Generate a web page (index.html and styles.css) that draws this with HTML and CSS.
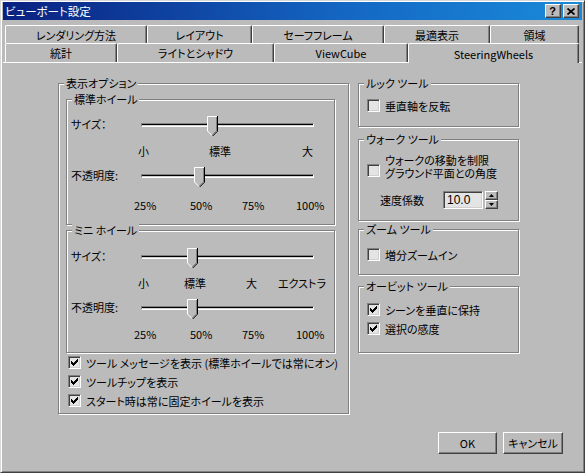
FILE: index.html
```html
<!DOCTYPE html>
<html lang="ja">
<head>
<meta charset="utf-8">
<title>ビューポート設定</title>
<link rel="stylesheet" href="styles.css">
</head>
<body>
<div class="window">
  <div class="titlebar">
    <span class="title">ビューポート設定</span>
    <div class="title-btns">
      <span class="tbtn help">?</span>
      <span class="tbtn close"><svg width="8" height="7" viewBox="0 0 8 7"><path d="M0.5 0.5L7.5 6.5M7.5 0.5L0.5 6.5" stroke="#000" stroke-width="1.7"/></svg></span>
    </div>
  </div>

  <div class="tabs">
    <div class="tabrow back">
      <div class="tab w-render">レンダリング方法</div>
      <div class="tab w-layout">レイアウト</div>
      <div class="tab w-safe">セーフフレーム</div>
      <div class="tab w-adapt">最適表示</div>
      <div class="tab w-region">領域</div>
    </div>
    <div class="tabrow front">
      <div class="tab w-stats">統計</div>
      <div class="tab w-light">ライトとシャドウ</div>
      <div class="tab w-cube">ViewCube</div>
      <div class="tab w-wheels selected">SteeringWheels</div>
    </div>
  </div>

  <div class="panel">
    <div class="columns">
      <div class="col-left">
        <div class="group outer">
          <span class="gtitle">表示オプション</span>

          <div class="group wheel std">
            <span class="gtitle">標準ホイール</span>
            <div class="srow">
              <span class="slabel">サイズ：</span>
              <div class="track"><span class="thumb" style="left:65px"><svg width="11" height="20" viewBox="0 0 11 20"><path d="M0 0H11V15L5.5 20.5L0 15Z" fill="#bbb"/><path d="M0.5 15V0.5H10" stroke="#fff" fill="none"/><path d="M0.5 15L5 19.5" stroke="#fff" fill="none"/><path d="M9.5 1V14.8L5.2 19" stroke="#808080" fill="none"/><path d="M10.5 0V15.2L5.5 20.2" stroke="#000" fill="none"/></svg></span></div>
            </div>
            <div class="ticks">
              <span class="t-s1">小</span><span class="t-s2">標準</span><span>大</span>
            </div>
            <div class="srow">
              <span class="slabel">不透明度:</span>
              <div class="track"><span class="thumb" style="left:52px"><svg width="11" height="20" viewBox="0 0 11 20"><path d="M0 0H11V15L5.5 20.5L0 15Z" fill="#bbb"/><path d="M0.5 15V0.5H10" stroke="#fff" fill="none"/><path d="M0.5 15L5 19.5" stroke="#fff" fill="none"/><path d="M9.5 1V14.8L5.2 19" stroke="#808080" fill="none"/><path d="M10.5 0V15.2L5.5 20.2" stroke="#000" fill="none"/></svg></span></div>
            </div>
            <div class="pcts">
              <span class="p1">25%</span><span class="p2">50%</span><span class="p3">75%</span><span>100%</span>
            </div>
          </div>

          <div class="group wheel mini">
            <span class="gtitle">ミニ ホイール</span>
            <div class="srow">
              <span class="slabel">サイズ：</span>
              <div class="track"><span class="thumb" style="left:45px"><svg width="11" height="20" viewBox="0 0 11 20"><path d="M0 0H11V15L5.5 20.5L0 15Z" fill="#bbb"/><path d="M0.5 15V0.5H10" stroke="#fff" fill="none"/><path d="M0.5 15L5 19.5" stroke="#fff" fill="none"/><path d="M9.5 1V14.8L5.2 19" stroke="#808080" fill="none"/><path d="M10.5 0V15.2L5.5 20.2" stroke="#000" fill="none"/></svg></span></div>
            </div>
            <div class="ticks">
              <span class="t-m1">小</span><span class="t-m2">標準</span><span class="t-m3">大</span><span>エクストラ</span>
            </div>
            <div class="srow">
              <span class="slabel">不透明度:</span>
              <div class="track"><span class="thumb" style="left:45px"><svg width="11" height="20" viewBox="0 0 11 20"><path d="M0 0H11V15L5.5 20.5L0 15Z" fill="#bbb"/><path d="M0.5 15V0.5H10" stroke="#fff" fill="none"/><path d="M0.5 15L5 19.5" stroke="#fff" fill="none"/><path d="M9.5 1V14.8L5.2 19" stroke="#808080" fill="none"/><path d="M10.5 0V15.2L5.5 20.2" stroke="#000" fill="none"/></svg></span></div>
            </div>
            <div class="pcts">
              <span class="p1">25%</span><span class="p2">50%</span><span class="p3">75%</span><span>100%</span>
            </div>
          </div>

          <div class="check indent">
            <span class="cb"><svg width="11" height="11" viewBox="1 1 11 11"><path d="M3 5h1v1h1v1h1v-1h1v-1h1v-1h1v-1h1v3h-1v1h-1v1h-1v1h-1v1h-1v-1h-1v-1h-1z" fill="#000"/></svg></span>
            <span>ツール メッセージを表示 (標準ホイールでは常にオン)</span>
          </div>
          <div class="check indent">
            <span class="cb"><svg width="11" height="11" viewBox="1 1 11 11"><path d="M3 5h1v1h1v1h1v-1h1v-1h1v-1h1v-1h1v3h-1v1h-1v1h-1v1h-1v1h-1v-1h-1v-1h-1z" fill="#000"/></svg></span>
            <span>ツールチップを表示</span>
          </div>
          <div class="check indent">
            <span class="cb"><svg width="11" height="11" viewBox="1 1 11 11"><path d="M3 5h1v1h1v1h1v-1h1v-1h1v-1h1v-1h1v3h-1v1h-1v1h-1v1h-1v1h-1v-1h-1v-1h-1z" fill="#000"/></svg></span>
            <span>スタート時は常に固定ホイールを表示</span>
          </div>
        </div>
      </div>

      <div class="col-right">
        <div class="group rbox look">
          <span class="gtitle">ルック ツール</span>
          <div class="check">
            <span class="cb"></span>
            <span>垂直軸を反転</span>
          </div>
        </div>

        <div class="group rbox walk">
          <span class="gtitle">ウォーク ツール</span>
          <div class="check two">
            <span class="cb low"></span>
            <span class="twoline">ウォークの移動を制限<br>グラウンド平面との角度</span>
          </div>
          <div class="speed">
            <span class="speed-label">速度係数</span>
            <span class="field">10.0</span>
            <span class="spin">
              <span class="spin-btn"><svg width="5" height="3" viewBox="0 0 5 3"><path d="M2.5 0L5 3H0Z" fill="#000"/></svg></span>
              <span class="spin-btn"><svg width="5" height="3" viewBox="0 0 5 3"><path d="M0 0H5L2.5 3Z" fill="#000"/></svg></span>
            </span>
          </div>
        </div>

        <div class="group rbox zoom">
          <span class="gtitle">ズーム ツール</span>
          <div class="check">
            <span class="cb"></span>
            <span>増分ズームイン</span>
          </div>
        </div>

        <div class="group rbox orbit">
          <span class="gtitle">オービット ツール</span>
          <div class="check">
            <span class="cb"><svg width="11" height="11" viewBox="1 1 11 11"><path d="M3 5h1v1h1v1h1v-1h1v-1h1v-1h1v-1h1v3h-1v1h-1v1h-1v1h-1v1h-1v-1h-1v-1h-1z" fill="#000"/></svg></span>
            <span>シーンを垂直に保持</span>
          </div>
          <div class="check">
            <span class="cb"><svg width="11" height="11" viewBox="1 1 11 11"><path d="M3 5h1v1h1v1h1v-1h1v-1h1v-1h1v-1h1v3h-1v1h-1v1h-1v1h-1v1h-1v-1h-1v-1h-1z" fill="#000"/></svg></span>
            <span>選択の感度</span>
          </div>
        </div>
      </div>
    </div>

    <div class="buttons">
      <span class="btn ok">OK</span>
      <span class="btn cancel">キャンセル</span>
    </div>
  </div>
</div>
</body>
</html>
```

FILE: styles.css
```css
html, body {
  margin: 0;
  padding: 0;
  background: #bbbbbb;
}

body {
  font-family: "Noto Sans CJK JP", "Noto Sans", "Liberation Sans", sans-serif;
  font-size: 11px;
  line-height: 14px;
  font-feature-settings: "palt";
  color: #000;
}

.window {
  width: 585px;
  height: 473px;
  box-sizing: border-box;
  border: 1px solid;
  border-color: #d8d8d8 #404040 #404040 #d8d8d8;
  box-shadow: inset 1px 1px 0 #fff, inset -1px -1px 0 #808080;
  padding: 1px 2px 2px 2px;
  display: flex;
  flex-direction: column;
  overflow: hidden;
}

/* ---------- title bar ---------- */
.titlebar {
  height: 18px;
  flex: none;
  background: linear-gradient(90deg, #0a2080 0%, #1468c4 60%, #1a8ad8 100%);
  display: flex;
  align-items: center;
  justify-content: space-between;
  padding: 0 3px 0 2px;
}

.title {
  color: #fff;
  font-size: 11.5px;
  line-height: 14px;
}

.title-btns {
  display: flex;
  gap: 2px;
}

.tbtn {
  width: 16px;
  height: 14px;
  box-sizing: border-box;
  background: #bbbbbb;
  border: 1px solid;
  border-color: #fff #404040 #404040 #fff;
  box-shadow: inset -1px -1px 0 #808080;
  display: flex;
  align-items: center;
  justify-content: center;
}

.help {
  font-family: "Liberation Sans", sans-serif;
  font-weight: bold;
  font-size: 11px;
  line-height: 11px;
  padding-right: 1px;
}

/* ---------- tabs ---------- */
.tabs {
  flex: none;
  margin-top: 5px;
  padding-left: 2px;
}

.tabrow {
  display: flex;
}

.back { height: 18px; }
.front { height: 19px; }

.tab {
  box-sizing: border-box;
  border-left: 1px solid #fff;
  border-top: 1px solid #fff;
  border-right: 1px solid #404040;
  box-shadow: inset -1px 0 0 #808080;
  border-radius: 2px 2px 0 0;
  display: flex;
  align-items: center;
  justify-content: center;
  background: #bbbbbb;
  white-space: nowrap;
}

.tab.selected {
  position: relative;
  z-index: 1;
  height: 20px;
  margin-bottom: -1px;
}

.w-render { width: 142px; }
.w-layout { width: 105px; }
.w-safe   { width: 132px; }
.w-adapt  { width: 106px; }
.w-region { width: 89px; }

.w-stats  { width: 112px; }
.w-light  { width: 157px; }
.w-cube   { width: 134px; }
.w-wheels { width: 171px; }

/* ---------- panel ---------- */
.panel {
  flex: 1;
  border-top: 1px solid #fff;
  display: flex;
  flex-direction: column;
}

.columns {
  display: flex;
  gap: 9px;
  padding: 20px 0 0 55px;
}

.group {
  position: relative;
  box-sizing: border-box;
  border: 1px solid #808080;
  box-shadow: inset 1px 1px 0 #fff, 1px 1px 0 #fff;
}

.gtitle {
  position: absolute;
  top: -8px;
  left: 5px;
  padding: 0 2px;
  background: #bbbbbb;
  line-height: 14px;
  white-space: nowrap;
}

/* left column */
.outer {
  width: 291px;
  height: 331px;
  padding: 15px 13px 0 7px;
}

.wheel {
  width: 269px;
}

.std {
  height: 126px;
  padding-top: 13px;
}

.mini {
  height: 123px;
  margin-top: 5px;
  padding-top: 14px;
}

.srow {
  display: flex;
  align-items: center;
  height: 24px;
}

.slabel {
  width: 70px;
  padding-left: 4px;
  white-space: nowrap;
  margin-top: -3px;
}

.track {
  position: relative;
  width: 173px;
  height: 4px;
  box-sizing: border-box;
  border-top: 1px solid #808080;
  border-left: 1px solid #808080;
  border-bottom: 1px solid #fff;
  border-right: 1px solid #fff;
  background: linear-gradient(#000 0 1px, #d0d0d0 1px 2px);
}

.thumb {
  position: absolute;
  top: -8px;
  width: 11px;
  height: 20px;
  display: block;
}

.thumb svg {
  display: block;
}

.ticks {
  display: flex;
  align-items: center;
  height: 27px;
  padding-left: 71px;
  white-space: nowrap;
}

.t-s1 { width: 71px; }
.t-s2 { width: 93px; }
.t-m1 { width: 46px; }
.t-m2 { width: 62px; }
.t-m3 { width: 32px; }

.pcts {
  display: flex;
  align-items: center;
  height: 24px;
  margin-top: 5px;
  padding-left: 67px;
  white-space: nowrap;
}

.mini .pcts {
  margin-top: 2px;
}

.p1 { width: 56px; }
.p2 { width: 52px; }
.p3 { width: 54px; }

/* checkboxes */
.check {
  display: flex;
  align-items: center;
  height: 19px;
  white-space: nowrap;
}

.check.indent {
  padding-left: 2px;
}

.cb {
  flex: none;
  width: 13px;
  height: 13px;
  box-sizing: border-box;
  border: 1px solid;
  border-color: #808080 #fff #fff #808080;
  box-shadow: inset 1px 1px 0 #404040, inset -1px -1px 0 #d0d0d0;
  background: #e4e4e4;
  margin-right: 5px;
  display: block;
}

.cb svg {
  display: block;
}

/* right column */
.col-right {
  display: flex;
  flex-direction: column;
}

.rbox {
  width: 161px;
  padding-left: 8px;
}

.look {
  height: 44px;
  padding-top: 12px;
}

.walk {
  height: 82px;
  margin-top: 12px;
  padding-top: 14px;
}

.zoom {
  height: 46px;
  margin-top: 8px;
  padding-top: 15px;
}

.orbit {
  height: 67px;
  margin-top: 11px;
  padding-top: 13px;
}

.check.two {
  height: 26px;
}

.cb.low {
  margin-top: 6px;
}

.twoline {
  line-height: 13px;
}

.speed {
  display: flex;
  align-items: center;
  height: 18px;
  margin-top: 11px;
  padding-left: 13px;
}

.speed-label {
  width: 63px;
}

.field {
  width: 40px;
  height: 18px;
  box-sizing: border-box;
  border: 1px solid;
  border-color: #808080 #fff #fff #808080;
  box-shadow: inset 1px 1px 0 #404040, inset -1px -1px 0 #d0d0d0;
  background: #e4e4e4;
  padding-left: 3px;
  line-height: 16px;
  font-family: "Liberation Sans", sans-serif;
  font-size: 12px;
}

.spin {
  margin-left: 2px;
  display: flex;
  flex-direction: column;
  width: 13px;
  height: 18px;
}

.spin-btn {
  flex: 1;
  box-sizing: border-box;
  border: 1px solid;
  border-color: #fff #404040 #404040 #fff;
  box-shadow: inset -1px -1px 0 #808080;
  display: flex;
  align-items: center;
  justify-content: center;
}

.spin-btn svg {
  display: block;
}

/* buttons */
.buttons {
  display: flex;
  justify-content: flex-end;
  gap: 6px;
  margin-top: 18px;
  padding-right: 19px;
}

.btn {
  height: 22px;
  box-sizing: border-box;
  border: 1px solid;
  border-color: #fff #404040 #404040 #fff;
  box-shadow: inset -1px -1px 0 #808080;
  display: flex;
  align-items: center;
  justify-content: center;
}

.ok { width: 59px; }
.cancel { width: 60px; }
```
